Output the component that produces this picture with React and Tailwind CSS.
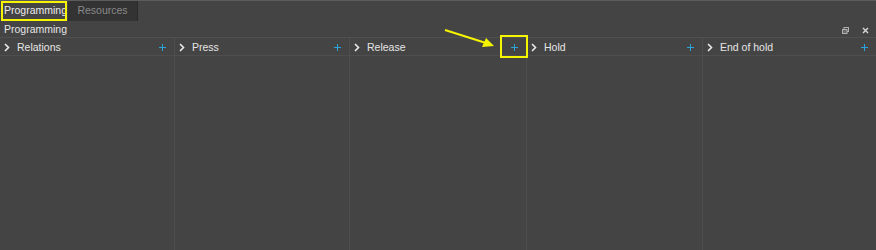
import React from 'react';

const columns = [
    { title: 'Relations', width: 'w-[175px]' },
    { title: 'Press', width: 'w-[175px]' },
    { title: 'Release', width: 'w-[177px]' },
    { title: 'Hold', width: 'w-[176px]' },
    { title: 'End of hold', width: 'flex-1' },
];

function Chevron() {
    return (
        <svg width="6" height="9" viewBox="0 0 6 9" className="shrink-0">
            <path d="M1 1 L4.5 4.5 L1 8" stroke="#e8e8e8" strokeWidth="1.6" fill="none" />
        </svg>
    );
}

// small blue "+" built from two 1px bars so it stays crisp
function Plus() {
    return (
        <span className="relative block w-[7px] h-[7px] shrink-0">
            <span className="absolute left-[3px] top-0 w-[1px] h-[7px] bg-[#2ba3dc]" />
            <span className="absolute left-0 top-[3px] w-[7px] h-[1px] bg-[#2ba3dc]" />
        </span>
    );
}

export default function App() {
    return (
        <div className="relative w-[876px] h-[250px] bg-[#444444] flex flex-col overflow-hidden text-[10.5px] font-['Liberation_Sans',Arial,sans-serif]">
            {/* tab bar */}
            <div className="h-[21px] flex border-t border-[#5c5c5c] bg-[#444444]">
                <div className="w-[68px] pl-[4px] flex items-center text-[#ececec]">Programming</div>
                <div className="w-[70px] flex items-center justify-center bg-[#333333] text-[#8a8a8a] border-r border-[#2a2a2a]">Resources</div>
            </div>

            {/* panel title */}
            <div className="h-[16px] flex items-center px-[4px] pt-[2px] text-[#e6e6e6]">
                <span>Programming</span>
                <div className="ml-auto flex items-center gap-[13px] pr-[3px]">
                    <svg width="7" height="7" viewBox="0 0 7 7">
                        <rect x="2" y="0.5" width="4.5" height="4" fill="none" stroke="#b0b0b0" />
                        <rect x="0.5" y="2.5" width="4.5" height="4" fill="#6a6a6a" stroke="#b0b0b0" />
                    </svg>
                    <svg width="7" height="7" viewBox="0 0 7 7">
                        <path d="M1 1 L6 6 M6 1 L1 6" stroke="#d8d8d8" strokeWidth="1.4" />
                    </svg>
                </div>
            </div>

            {/* columns */}
            <div className="flex-1 flex border-t border-[#505050]">
                {columns.map((c, i) => (
                    <div
                        key={c.title}
                        className={`${c.width} flex flex-col ${i < columns.length - 1 ? 'border-r border-[#4e4e4e]' : ''}`}
                    >
                        <div className="h-[18px] flex items-center pl-[4px] pr-[8px] pt-[2px] gap-[7px] border-b border-[#4e4e4e] text-[#e4e4e4]">
                            <Chevron />
                            <span>{c.title}</span>
                            <span className="ml-auto">
                                <Plus />
                            </span>
                        </div>
                        <div className="flex-1" />
                    </div>
                ))}
            </div>

            {/* annotations */}
            <div className="absolute left-[1px] top-[1px] w-[66px] h-[20px] border-2 border-[#f5f500]" />
            <div className="absolute left-[500px] top-[35px] w-[28px] h-[23px] border-2 border-[#f5f500]" />
            <svg className="absolute left-0 top-0" width="876" height="250">
                <path d="M445 30 L486 43" stroke="#f5f500" strokeWidth="2" />
                <path d="M494 46 L482 47 L486 38 Z" fill="#f5f500" />
            </svg>
        </div>
    );
}
